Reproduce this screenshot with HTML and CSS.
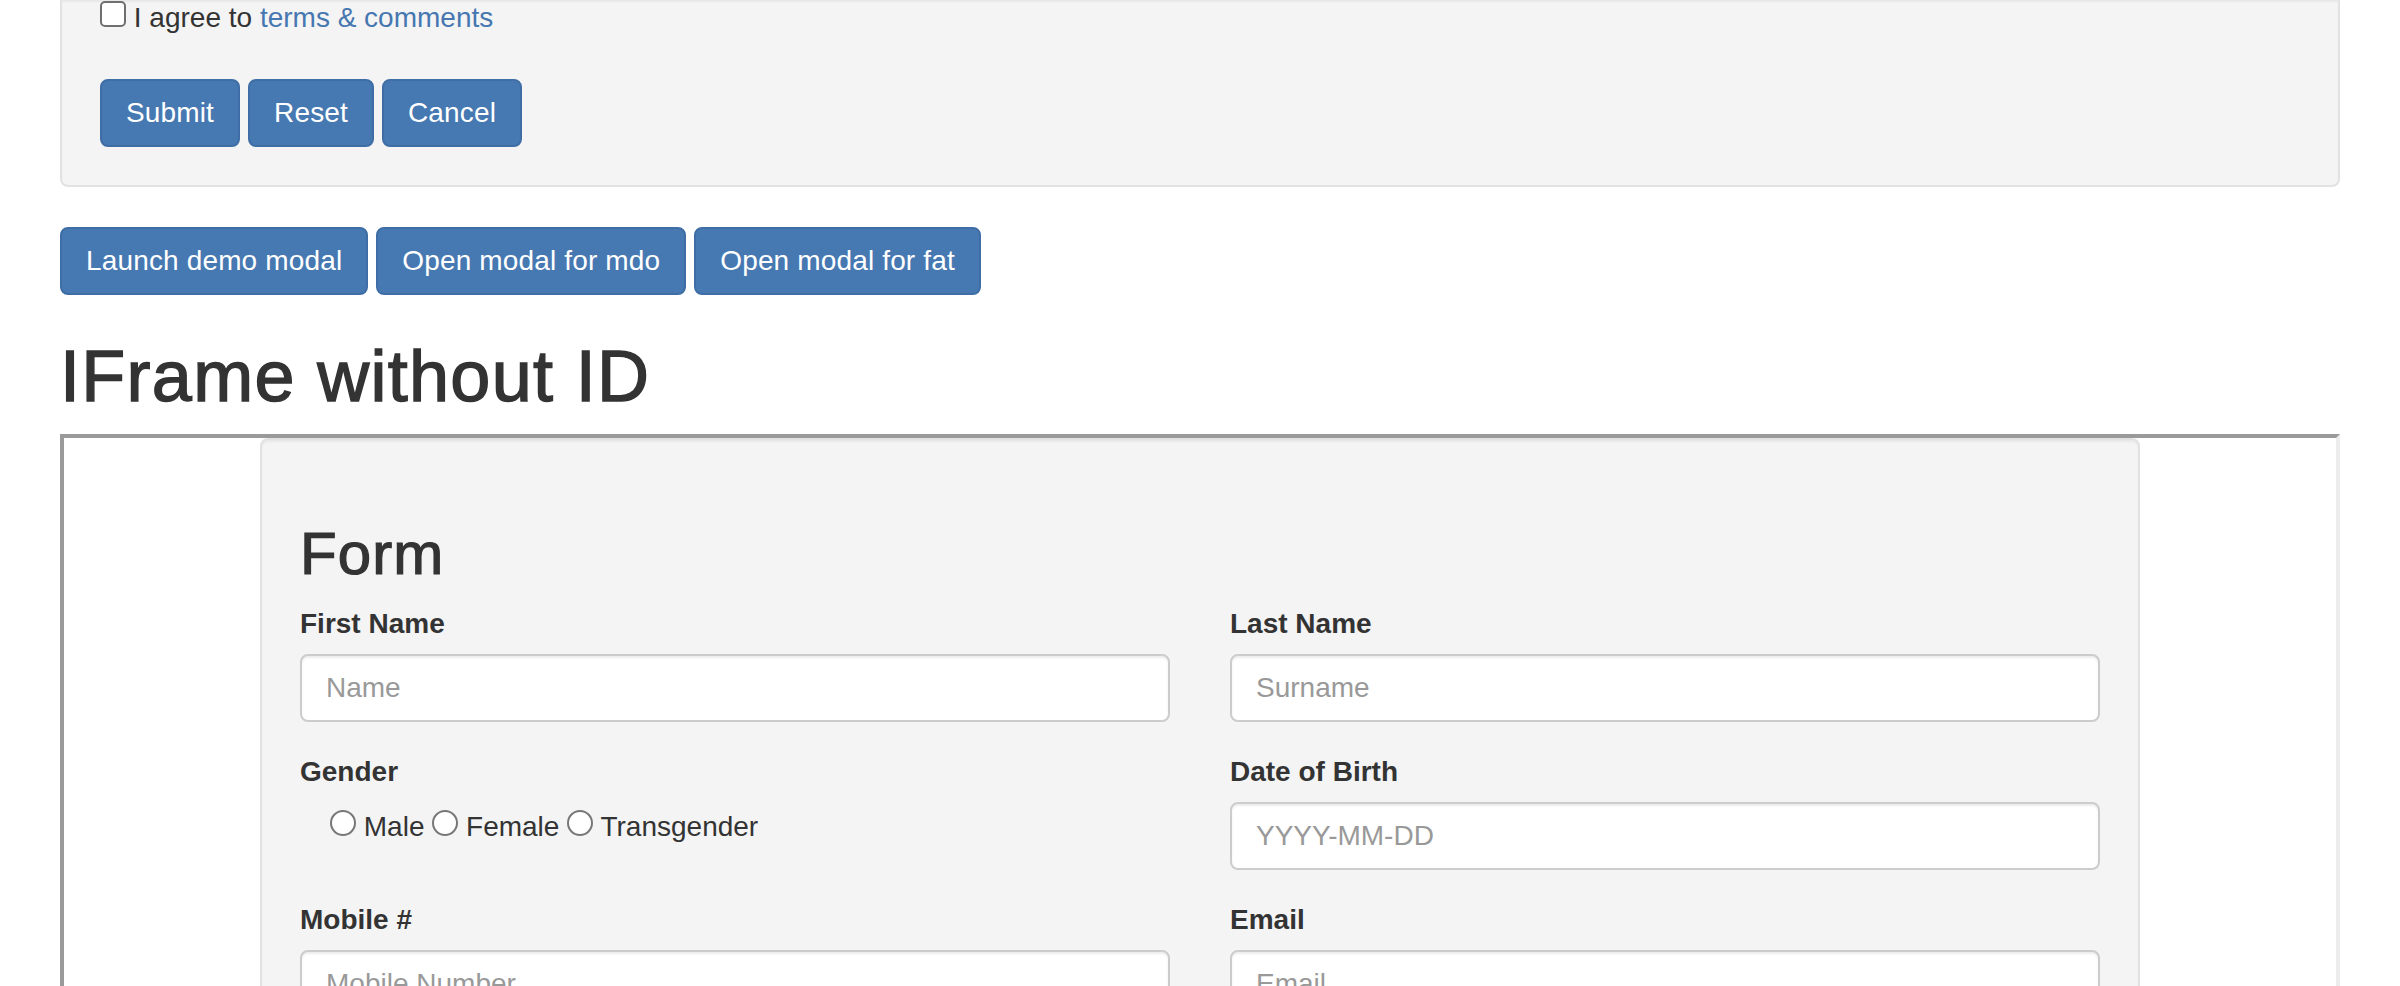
FILE: index.html
```html
<!DOCTYPE html>
<html lang="en">
<head>
<meta charset="utf-8">
<title>IFrame without ID</title>
<link rel="stylesheet" href="styles.css">
</head>
<body>
<div class="container">
  <div class="well well-cut">
    <div class="agree"><input type="checkbox" class="check"> I agree to <a href="#" class="link">terms &amp; comments</a></div>
    <div class="btn-row btn-row-form">
      <button class="btn">Submit</button>
      <button class="btn">Reset</button>
      <button class="btn">Cancel</button>
    </div>
  </div>
  <div class="btn-row">
    <button class="btn">Launch demo modal</button>
    <button class="btn">Open modal for mdo</button>
    <button class="btn">Open modal for fat</button>
  </div>
  <h1 class="title">IFrame without ID</h1>
  <div class="frame">
    <div class="inner-container">
      <div class="well form-well">
        <h2 class="form-title">Form</h2>
        <div class="row">
          <div class="form-group">
            <label class="label">First Name</label>
            <input class="control" type="text" placeholder="Name">
          </div>
          <div class="form-group">
            <label class="label">Last Name</label>
            <input class="control" type="text" placeholder="Surname">
          </div>
        </div>
        <div class="row">
          <div class="form-group">
            <label class="label">Gender</label>
            <div class="radios"><input type="radio" name="g" class="radio"> Male <input type="radio" name="g" class="radio"> Female <input type="radio" name="g" class="radio"> Transgender</div>
          </div>
          <div class="form-group">
            <label class="label">Date of Birth</label>
            <input class="control" type="text" placeholder="YYYY-MM-DD">
          </div>
        </div>
        <div class="row">
          <div class="form-group">
            <label class="label">Mobile #</label>
            <input class="control" type="text" placeholder="Mobile Number">
          </div>
          <div class="form-group">
            <label class="label">Email</label>
            <input class="control" type="text" placeholder="Email">
          </div>
        </div>
      </div>
    </div>
  </div>
</div>
</body>
</html>
```

FILE: styles.css
```css
html {
  overflow: hidden;
}
* {
  box-sizing: border-box;
}
body {
  margin: 0;
  background: #ffffff;
  color: #333333;
  font-family: "Liberation Sans", Helvetica, Arial, sans-serif;
  font-size: 28px;
  line-height: 40px;
}
.container {
  width: 2340px;
  margin: 0 auto;
  padding: 0 30px;
}
.well {
  background: #f4f4f4;
  border: 2px solid #e2e2e2;
  border-radius: 8px;
  box-shadow: inset 0 2px 2px rgba(0, 0, 0, 0.05);
  padding: 38px;
}
.well-cut {
  border-top: none;
  border-radius: 0 0 8px 8px;
  padding-top: 0;
  margin-bottom: 40px;
}
.agree {
  line-height: 36px;
}
.check {
  -webkit-appearance: none;
  appearance: none;
  width: 26px;
  height: 26px;
  margin: 0;
  border: 2px solid #6f6f6f;
  border-radius: 5px;
  background: #ffffff;
  vertical-align: baseline;
}
.link {
  color: #4677b1;
  text-decoration: none;
}
.btn-row {
  display: flex;
  gap: 8px;
}
.btn-row-form {
  margin-top: 43px;
}
.btn {
  font-family: inherit;
  font-size: 28px;
  line-height: 40px;
  letter-spacing: 0.15px;
  padding: 12px 24px;
  border: 2px solid #3f6ea6;
  border-radius: 8px;
  background: #4678b1;
  color: #ffffff;
  margin: 0;
}
.title {
  font-size: 72px;
  font-weight: normal;
  line-height: 79.2px;
  letter-spacing: 1.3px;
  -webkit-text-stroke: 1.4px #333333;
  margin: 42px 0 18px;
}
.frame {
  width: 2280px;
  height: 760px;
  border: 4px solid;
  border-color: #9a9a9a #ececec #ececec #9a9a9a;
  overflow: hidden;
}
.inner-container {
  width: 1940px;
  margin: 0 auto;
  padding: 0 30px;
}
.form-title {
  font-size: 60px;
  font-weight: normal;
  line-height: 66px;
  letter-spacing: 1.1px;
  -webkit-text-stroke: 1.2px #333333;
  margin: 43px 0 17px;
}
.row {
  display: grid;
  grid-template-columns: 1fr 1fr;
  column-gap: 60px;
}
.form-group {
  margin-bottom: 30px;
}
.label {
  display: inline-block;
  font-weight: bold;
  margin-bottom: 10px;
}
.control {
  display: block;
  width: 100%;
  height: 68px;
  padding: 12px 24px;
  font-family: inherit;
  font-size: 28px;
  line-height: 40px;
  color: #555555;
  background: #ffffff;
  border: 2px solid #cccccc;
  border-radius: 8px;
  box-shadow: inset 0 2px 2px rgba(0, 0, 0, 0.075);
}
.control::placeholder {
  color: #999999;
}
.radios {
  padding-left: 30px;
}
.radio {
  -webkit-appearance: none;
  appearance: none;
  width: 26px;
  height: 26px;
  margin: 8px 0 0;
  border: 2px solid #777777;
  border-radius: 50%;
  background: #ffffff;
  vertical-align: baseline;
}
```
